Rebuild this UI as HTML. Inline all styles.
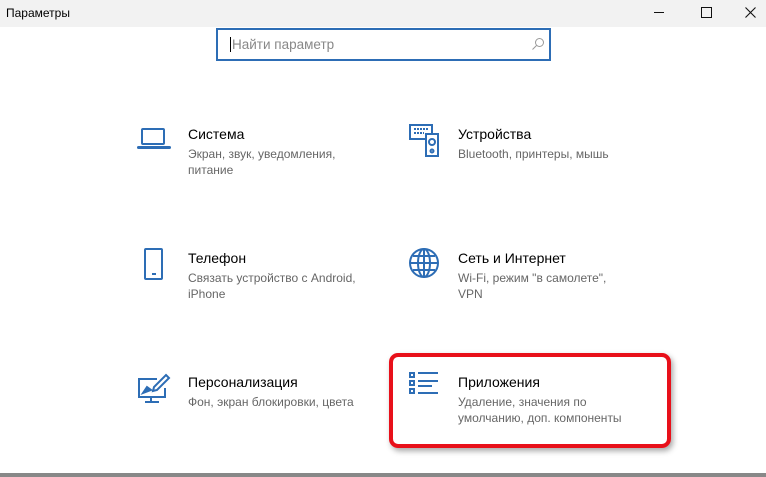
<!DOCTYPE html><html><head><meta charset="utf-8"><style>
body{margin:0;width:766px;height:477px;background:#fff;font-family:"Liberation Sans",sans-serif;position:relative;overflow:hidden}
.tb{position:absolute;left:0;top:0;width:766px;height:27px;background:#f2f2f2}
.tt{position:absolute;left:6px;top:6px;font-size:12px;color:#000}
.search{position:absolute;left:216px;top:28px;width:331px;height:29px;border:2px solid #2d6db5;box-sizing:content-box}
.search span{position:absolute;left:12px;top:7px;font-size:13.5px;color:#888;border-left:1px solid #000;padding-left:1px}
.it{position:absolute}
.h{font-size:14px;color:#000}
.d{font-size:12px;color:#666;line-height:16px;margin-top:4px}
svg{position:absolute}
.red{position:absolute;left:389px;top:353px;width:274px;height:87px;border:4px solid #e8101a;border-radius:9px;box-shadow:2px 3px 6px rgba(0,0,0,.35)}
.bot{position:absolute;left:0;top:473px;width:766px;height:4px;background:#888}
</style></head><body>
<div class="tb"><div class="tt">Параметры</div>
<div style="position:absolute;left:654px;top:12px;width:10px;height:1px;background:#111"></div>
<div style="position:absolute;left:701px;top:7px;width:9px;height:9px;border:1px solid #111"></div>
<svg style="left:745px;top:7px" width="11" height="11" viewBox="0 0 11 11"><path d="M0.5 0.5L10.5 10.5M10.5 0.5L0.5 10.5" stroke="#111" stroke-width="1.1"/></svg></div>
<div class="search"><span>Найти параметр</span>
<svg style="left:313px;top:7px" width="14" height="14" viewBox="0 0 14 14"><circle cx="8.5" cy="5.5" r="4" fill="none" stroke="#999" stroke-width="1"/><path d="M5.5 8.5L1.5 12.5" stroke="#999"/></svg></div>

<svg style="left:137px;top:127px" width="34" height="24" viewBox="0 0 34 24" fill="none" stroke="#2d6db5" stroke-width="2"><rect x="5" y="2" width="22" height="15" rx="1"/><path d="M1.5 20.5h31" stroke-width="3" stroke-linecap="round"/></svg>
<div class="it" style="left:188px;top:126px"><div class="h">Система</div><div class="d">Экран, звук, уведомления,<br>питание</div></div>

<svg style="left:409px;top:124px" width="32" height="34" viewBox="0 0 32 34" fill="none" stroke="#2d6db5" stroke-width="2"><rect x="1" y="1" width="22" height="14"/><path d="M5 5h14M5 9h10" stroke-dasharray="2 1"/><rect x="17" y="10" width="12" height="22" fill="#fff"/><circle cx="23" cy="18" r="3"/><circle cx="23" cy="27" r="1.5"/></svg>
<div class="it" style="left:458px;top:126px"><div class="h">Устройства</div><div class="d">Bluetooth, принтеры, мышь</div></div>

<svg style="left:142px;top:247px" width="24" height="34" viewBox="0 0 24 34" fill="none" stroke="#2d6db5" stroke-width="2"><rect x="3" y="2" width="17" height="30" rx="1"/><path d="M10 27h4"/></svg>
<div class="it" style="left:188px;top:250px"><div class="h">Телефон</div><div class="d">Связать устройство с Android,<br>iPhone</div></div>

<svg style="left:408px;top:247px" width="32" height="32" viewBox="0 0 32 32" fill="none" stroke="#2d6db5" stroke-width="2"><circle cx="16" cy="16" r="14"/><ellipse cx="16" cy="16" rx="6" ry="14"/><path d="M2 16h28M5 9h22M5 23h22M16 2v28"/></svg>
<div class="it" style="left:458px;top:250px"><div class="h">Сеть и Интернет</div><div class="d">Wi-Fi, режим "в самолете",<br>VPN</div></div>

<svg style="left:137px;top:373px" width="34" height="32" viewBox="0 0 34 32" fill="none" stroke="#2d6db5" stroke-width="2"><path d="M20 6H2v18h26v-9"/><path d="M14 24v4M8 29h14"/><path d="M29 2l3 3-12 12-4 1 1-4z"/><path d="M6 20l4-6 4 3z" fill="#2d6db5"/></svg>
<div class="it" style="left:188px;top:374px"><div class="h">Персонализация</div><div class="d">Фон, экран блокировки, цвета</div></div>

<svg style="left:408px;top:371px" width="32" height="30" viewBox="0 0 32 30" fill="none" stroke="#2d6db5" stroke-width="2"><rect x="2" y="2" width="4" height="4"/><rect x="2" y="10" width="4" height="4"/><rect x="2" y="18" width="4" height="4"/><path d="M10 2h20M10 10h20M10 15h14M10 22h20"/></svg>
<div class="it" style="left:458px;top:374px"><div class="h">Приложения</div><div class="d">Удаление, значения по<br>умолчанию, доп. компоненты</div></div>

<div class="red"></div>
<div class="bot"></div>
</body></html>
